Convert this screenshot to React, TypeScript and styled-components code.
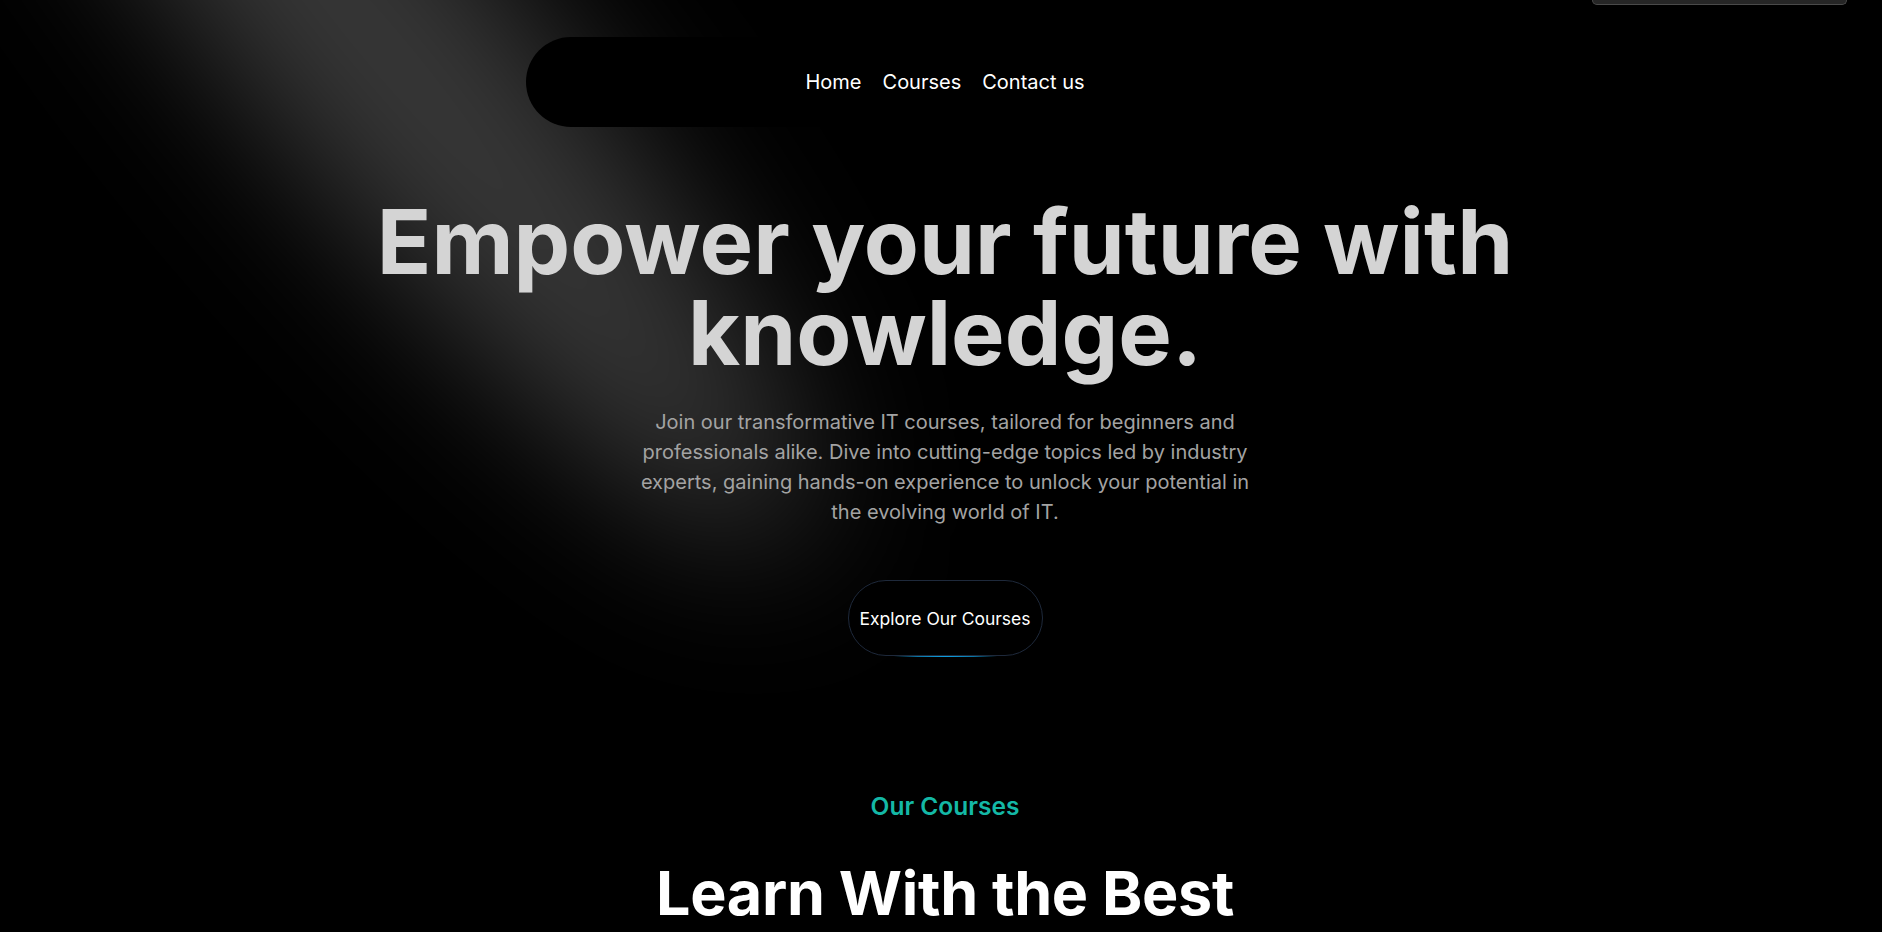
import React from "react";
import styled, { createGlobalStyle } from "styled-components";

const GlobalStyle = createGlobalStyle`
  html, body {
    margin: 0;
    padding: 0;
    background: #000;
  }
  body {
    font-family: Inter, "Noto Sans", sans-serif;
    color: #fff;
    -webkit-font-smoothing: antialiased;
  }
  * { box-sizing: border-box; }
`;

const Page = styled.div`
  position: relative;
  min-height: 100vh;
  overflow: hidden;
  background: #000;
`;

const SpotlightSvg = styled.svg`
  position: absolute;
  left: 0;
  top: 0;
  width: 1882px;
  height: 932px;
  pointer-events: none;
  z-index: 0;
`;

const CornerTab = styled.div`
  position: absolute;
  top: 0;
  right: 35px;
  width: 255px;
  height: 5px;
  background: #262626;
  border: 1px solid #4a4a4a;
  border-top: none;
  border-radius: 0 0 9px 9px;
  z-index: 5;
`;

const Content = styled.div`
  position: relative;
  z-index: 1;
  display: flex;
  flex-direction: column;
  align-items: center;
  padding-left: 8px;
`;

const Header = styled.header`
  width: 100%;
  display: flex;
  justify-content: center;
  padding-top: 37px;
`;

const NavPill = styled.nav`
  width: 838px;
  height: 90px;
  border-radius: 45px;
  background: #000;
  display: flex;
  align-items: center;
  justify-content: center;
  gap: 21px;
`;

const NavLink = styled.a`
  font-family: Inter, sans-serif;
  font-size: 20px;
  font-weight: 400;
  color: #fff;
  text-decoration: none;
  cursor: pointer;
`;

const Hero = styled.section`
  display: flex;
  flex-direction: column;
  align-items: center;
  text-align: center;
  padding-top: 69px;
`;

const Title = styled.h1`
  margin: 0;
  font-family: Inter, sans-serif;
  font-size: 90px;
  font-weight: 700;
  line-height: 91px;
  color: #d4d4d4;
  letter-spacing: 0;
`;

const Lead = styled.p`
  margin: 29px 0 0;
  max-width: 620px;
  font-family: Inter, sans-serif;
  font-size: 20px;
  font-weight: 400;
  line-height: 30px;
  color: #a3a3a3;
`;

const ButtonRing = styled.div`
  margin-top: 52px;
  padding: 1px;
  width: 197px;
  height: 78px;
  border-radius: 39px;
  background: radial-gradient(ellipse 52px 5px at 50% 100%, #0ea5e9 0%, rgba(14,165,233,0.7) 55%, transparent 100%);
`;

const ExploreButton = styled.button`
  width: 100%;
  height: 100%;
  border-radius: 38px;
  background: #000;
  border: 1px solid #1e293b;
  color: #fff;
  font-family: Inter, sans-serif;
  font-size: 17.5px;
  font-weight: 400;
  cursor: pointer;
  padding: 0;
`;

const Courses = styled.section`
  width: 100%;
  display: flex;
  flex-direction: column;
  align-items: center;
  text-align: center;
  padding-top: 133px;
  padding-bottom: 200px;
  background:
    radial-gradient(ellipse 170px 120px at 300px 100%, rgba(20, 60, 72, 0.22), transparent 100%),
    radial-gradient(ellipse 130px 110px at 862px 100%, rgba(20, 60, 72, 0.18), transparent 100%),
    radial-gradient(ellipse 170px 120px at 1520px 100%, rgba(20, 60, 72, 0.2), transparent 100%);
`;

const Eyebrow = styled.h2`
  margin: 0;
  font-family: Inter, sans-serif;
  font-size: 24.5px;
  font-weight: 600;
  line-height: 32px;
  color: #14b8a6;
`;

const SectionTitle = styled.p`
  margin: 41px 0 0;
  font-family: Inter, sans-serif;
  font-size: 61px;
  font-weight: 700;
  line-height: 61px;
  color: #fff;
  letter-spacing: -0.3px;
`;

function Spotlight() {
  return (
    <SpotlightSvg viewBox="0 0 1882 932" xmlns="http://www.w3.org/2000/svg">
      <defs>
        <filter id="spot-blur" x="-50%" y="-50%" width="200%" height="200%">
          <feGaussianBlur stdDeviation="78" />
        </filter>
      </defs>
      <g filter="url(#spot-blur)">
        <ellipse
          cx="0"
          cy="0"
          rx="640"
          ry="135"
          fill="white"
          fillOpacity="0.22"
          transform="translate(385 50) rotate(50)"
        />
      </g>
    </SpotlightSvg>
  );
}

export default function App() {
  return (
    <>
      <GlobalStyle />
      <Page>
        <Spotlight />
        <CornerTab />
        <Content>
          <Header>
            <NavPill>
              <NavLink>Home</NavLink>
              <NavLink>Courses</NavLink>
              <NavLink>Contact us</NavLink>
            </NavPill>
          </Header>
          <Hero>
            <Title>
              Empower your future with
              <br />
              knowledge.
            </Title>
            <Lead>
              Join our transformative IT courses, tailored for beginners and
              professionals alike. Dive into cutting-edge topics led by industry
              experts, gaining hands-on experience to unlock your potential in
              the evolving world of IT.
            </Lead>
            <ButtonRing>
              <ExploreButton>Explore Our Courses</ExploreButton>
            </ButtonRing>
          </Hero>
          <Courses>
            <Eyebrow>Our Courses</Eyebrow>
            <SectionTitle>Learn With the Best</SectionTitle>
          </Courses>
        </Content>
      </Page>
    </>
  );
}
